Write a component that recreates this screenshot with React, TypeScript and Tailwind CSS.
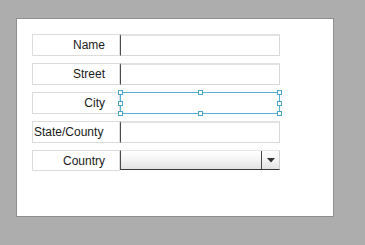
import React from 'react';

const fields = ['Name', 'Street', 'City', 'State/County'];

const Handle: React.FC<{ className: string }> = ({ className }) => (
  <span className={`absolute w-[5px] h-[5px] bg-white border border-[#4aa3c8] ${className}`} />
);

const Label: React.FC<{ text: string }> = ({ text }) => (
  <div className="w-[88px] h-full border border-[#dcdcdc] bg-white flex items-center justify-end pr-[14px] text-[12px] text-[#1a1a1a] whitespace-nowrap overflow-visible">
    {text}
  </div>
);

export default function App() {
  return (
    <div className="w-[365px] h-[245px] bg-[#adadad] pt-[18px] pl-[16px]" style={{ fontFamily: '"Liberation Sans", Arial, sans-serif' }}>
      <div className="w-[318px] h-[199px] bg-white border border-[#8f8f8f] pt-[15px] pl-[15px] flex flex-col gap-[7px]">
        {fields.map((f) => (
          <div key={f} className="flex h-[22px]">
            {f === 'State/County' ? (
              <div className="w-[88px] h-full border border-[#dcdcdc] bg-white flex items-center pl-[1px] text-[12px] text-[#1a1a1a] whitespace-nowrap">
                {f}
              </div>
            ) : (
              <Label text={f} />
            )}
            {f === 'City' ? (
              <div className="relative w-[160px] h-full border border-[#5aaed2] bg-white">
                <Handle className="-left-[3px] -top-[3px]" />
                <Handle className="left-[77px] -top-[3px]" />
                <Handle className="-right-[3px] -top-[3px]" />
                <Handle className="-left-[3px] top-[8px]" />
                <Handle className="-right-[3px] top-[8px]" />
                <Handle className="-left-[3px] -bottom-[3px]" />
                <Handle className="left-[77px] -bottom-[3px]" />
                <Handle className="-right-[3px] -bottom-[3px]" />
              </div>
            ) : (
              <div className="w-[160px] h-full bg-white border-l border-l-[#4a4a4a] border-t-2 border-t-[#e2e2e2] border-r border-r-[#d8d8d8] border-b border-b-[#d8d8d8]" />
            )}
          </div>
        ))}
        <div className="flex h-[21px]">
          <Label text="Country" />
          <div className="w-[160px] h-[20px] flex bg-gradient-to-b from-white via-[#f4f4f4] to-[#e2e2e2] border-l border-l-[#4a4a4a] border-b border-b-[#3a3a3a] border-t border-t-[#e6e6e6] border-r border-r-[#d0d0d0]">
            <div className="flex-1" />
            <div className="w-[18px] h-full border-l border-l-[#4a4a4a] flex items-center justify-center">
              <svg width="8" height="5" viewBox="0 0 8 5">
                <path d="M0 0 L8 0 L4 4.5 Z" fill="#333" />
              </svg>
            </div>
          </div>
        </div>
      </div>
    </div>
  );
}
